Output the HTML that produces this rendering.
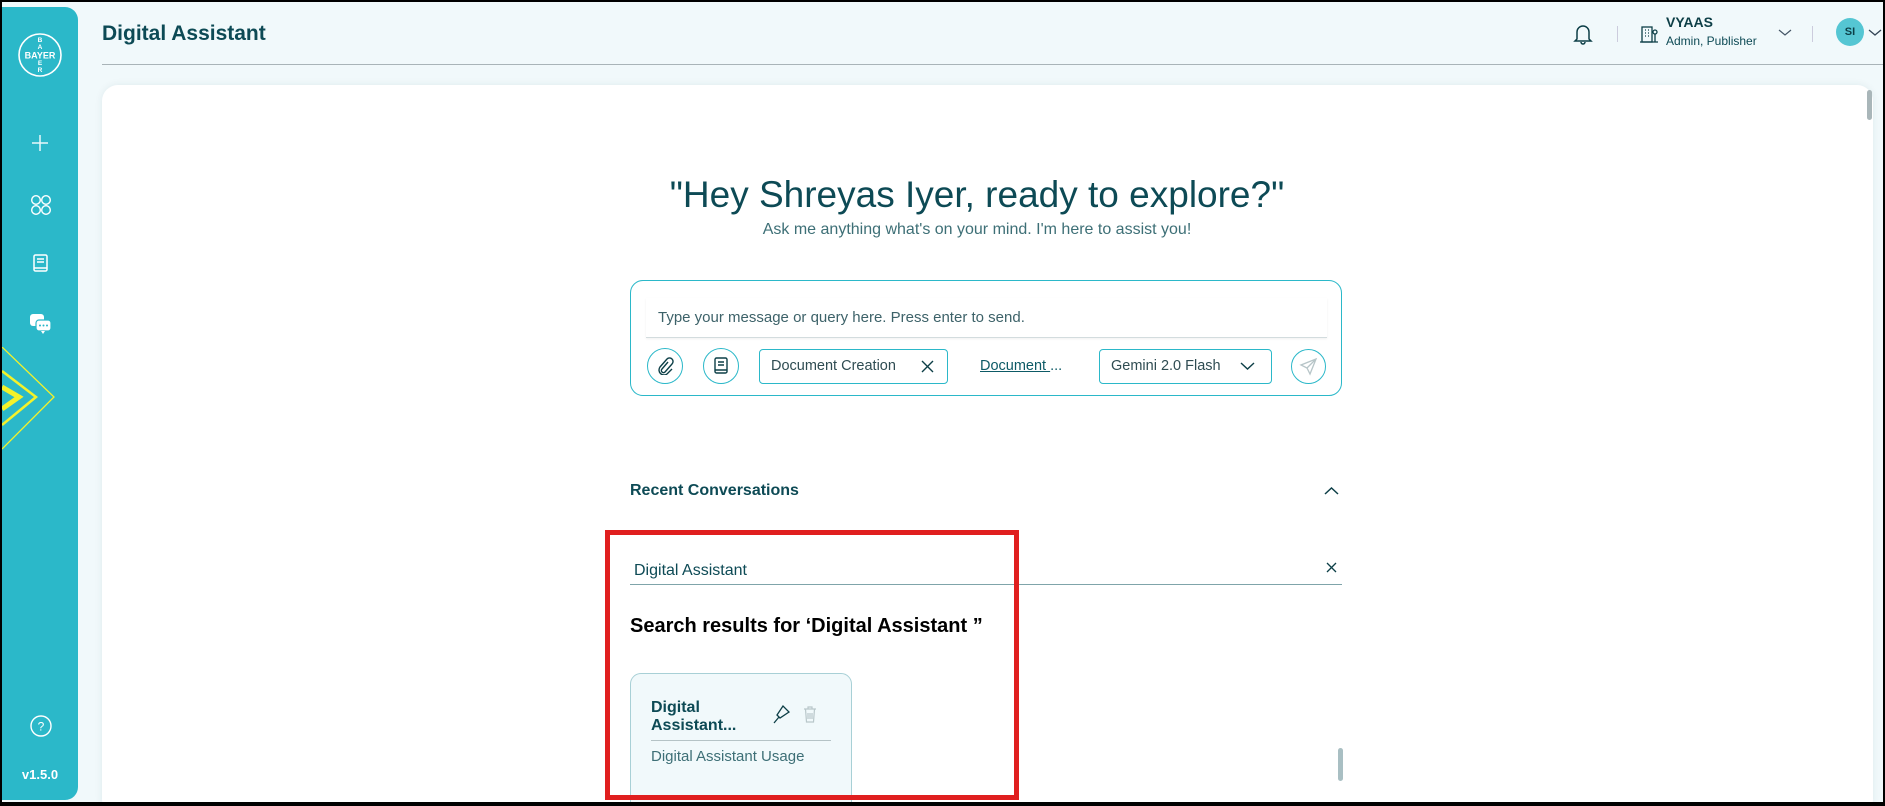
<!DOCTYPE html>
<html><head><meta charset="utf-8"><style>
*{box-sizing:border-box;margin:0;padding:0}
body{width:1885px;height:806px;overflow:hidden;background:#000;font-family:"Liberation Sans",sans-serif;position:relative}
.page{position:absolute;left:2px;top:2px;width:1881px;height:800px;background:#f1f9fb;overflow:hidden}
.abs{position:absolute}
.side{position:absolute;left:0;top:5px;width:76px;height:793px;background:#2bb8c9;border-radius:0 13px 13px 0;overflow:hidden}
.t{position:absolute;white-space:nowrap}
</style></head><body><div class="page">
<div class="side">
 <svg class="abs" style="left:15px;top:25px" width="46" height="46" viewBox="0 0 46 46"><circle cx="23" cy="23" r="21" fill="none" stroke="#fff" stroke-width="1.6"/>
 <text x="23" y="26.5" font-size="9" fill="#fff" text-anchor="middle" font-family="Liberation Sans" font-weight="bold">BAYER</text>
 <text x="23" y="10" font-size="6.5" fill="#fff" text-anchor="middle" font-family="Liberation Sans" font-weight="bold">B</text>
 <text x="23" y="17" font-size="6.5" fill="#fff" text-anchor="middle" font-family="Liberation Sans" font-weight="bold">A</text>
 <text x="23" y="33" font-size="6.5" fill="#fff" text-anchor="middle" font-family="Liberation Sans" font-weight="bold">E</text>
 <text x="23" y="40" font-size="6.5" fill="#fff" text-anchor="middle" font-family="Liberation Sans" font-weight="bold">R</text></svg>
 <svg class="abs" style="left:29px;top:127px" width="18" height="18"><path d="M9 1v16M1 9h16" stroke="#e8f8fa" stroke-width="1.5"/></svg>
 <svg class="abs" style="left:28px;top:187px" width="22" height="22" fill="none" stroke="#fff" stroke-width="1.4"><circle cx="6" cy="6" r="4.3"/><circle cx="16" cy="6" r="4.3"/><circle cx="6" cy="16" r="4.3"/><circle cx="16" cy="16" r="4.3"/></svg>
 <svg class="abs" style="left:31px;top:247px" width="16" height="20" fill="none" stroke="#fff" stroke-width="1.5"><rect x="1" y="1" width="13" height="16" rx="1.5"/><path d="M4 5h7M4 8h7M1 14h13"/></svg>
 <svg class="abs" style="left:27px;top:306px" width="24" height="22"><rect x="1" y="1" width="14" height="12" rx="3" fill="#fff"/><rect x="7" y="7" width="15" height="11" rx="3" fill="#fff" stroke="#2bb8c9" stroke-width="1.2"/><path d="M12 18l2 3 2-3" fill="#fff"/><circle cx="11" cy="12.5" r="1" fill="#2bb8c9"/><circle cx="14.5" cy="12.5" r="1" fill="#2bb8c9"/><circle cx="18" cy="12.5" r="1" fill="#2bb8c9"/></svg>
 <svg class="abs" style="left:0;top:340px" width="60" height="110" fill="none"><path d="M0 0L52 50L0 102" stroke="#f4f22a" stroke-width="1.3"/><path d="M0 24L34 50L0 78" stroke="#f4f22a" stroke-width="2.5"/><path d="M0 40L17 50L0 62" stroke="#f4f22a" stroke-width="5"/></svg>
 <svg class="abs" style="left:27px;top:707px" width="24" height="24" fill="none" stroke="#fff" stroke-width="1.4"><circle cx="12" cy="12" r="10"/><text x="12" y="16.5" font-size="12" fill="#fff" stroke="none" text-anchor="middle" font-family="Liberation Sans">?</text></svg>
 <div class="t" style="left:0;width:76px;text-align:center;top:760px;color:#fff;font-size:13px;font-weight:bold">v1.5.0</div>
</div>
<div class="t" style="left:100px;top:20px;font-size:21px;font-weight:bold;color:#0d4a55">Digital Assistant</div>
<div class="abs" style="left:100px;top:62px;width:1781px;height:1px;background:#a9b4b8"></div>
<svg class="abs" style="left:1571px;top:21px" width="20" height="22" fill="none" stroke="#0d3f47" stroke-width="1.5"><path d="M4 16V9a6 6 0 0112 0v7l2 2H2z"/><path d="M8 19a2 2 0 004 0"/></svg>
<div class="abs" style="left:1615px;top:24px;width:1px;height:16px;background:#ccd"></div>
<svg class="abs" style="left:1637px;top:22px" width="20" height="20" fill="none" stroke="#0d3f47" stroke-width="1.3"><rect x="3" y="3" width="10" height="15"/><path d="M6 6h1M9 6h1M6 9h1M9 9h1M6 12h1M9 12h1M1 18h18M16 18V10"/><circle cx="16" cy="8" r="2"/></svg>
<div class="t" style="left:1664px;top:12px;font-size:14px;font-weight:bold;color:#0d3f47">VYAAS</div>
<div class="t" style="left:1664px;top:32px;font-size:12px;color:#0d4a55">Admin, Publisher</div>
<svg class="abs" style="left:1776px;top:27px" width="14" height="8" fill="none" stroke="#456" stroke-width="1.2"><path d="M1 1l6 5 6-5"/></svg>
<div class="abs" style="left:1810px;top:24px;width:1px;height:16px;background:#ccd"></div>
<div class="abs" style="left:1834px;top:16px;width:28px;height:28px;border-radius:50%;background:#55c6d3;color:#0d3f47;font-size:11px;font-weight:bold;text-align:center;line-height:28px">SI</div>
<svg class="abs" style="left:1866px;top:27px" width="14" height="8" fill="none" stroke="#345" stroke-width="1.3"><path d="M1 1l6 5 6-5"/></svg>
<div class="abs" style="left:100px;top:83px;width:1771px;height:730px;background:#fff;border-radius:16px;box-shadow:0 0 8px rgba(0,60,80,.08)"></div>
<div class="abs" style="left:1865px;top:88px;width:5px;height:30px;border-radius:3px;background:#a9b6b9"></div>
<div class="t" style="left:0;width:1950px;text-align:center;top:172px;font-size:37px;color:#0d4a55">"Hey Shreyas Iyer, ready to explore?"</div>
<div class="t" style="left:0;width:1950px;text-align:center;top:219px;font-size:16px;color:#3d6f76">Ask me anything what's on your mind. I'm here to assist you!</div>
<div class="abs" style="left:628px;top:278px;width:712px;height:116px;border:1px solid #2bb8c9;border-radius:13px"></div>
<div class="abs" style="left:644px;top:296px;width:681px;height:40px;border-bottom:1px solid #d3dcde;box-shadow:0 1px 2px rgba(0,0,0,.06)"></div>
<div class="t" style="left:656px;top:307px;font-size:15px;color:#3d6269">Type your message or query here. Press enter to send.</div>
<div class="abs" style="left:645px;top:346px;width:36px;height:36px;border:1px solid #2bb8c9;border-radius:50%"></div>
<svg class="abs" style="left:654px;top:355px" width="18" height="18" fill="none" stroke="#0d3f47" stroke-width="1.4"><path d="M12 5l-6 7a2 2 0 003 3l7-8a3.5 3.5 0 00-5-5L4 10a5 5 0 007 7l5-5"/></svg>
<div class="abs" style="left:701px;top:346px;width:36px;height:36px;border:1px solid #2bb8c9;border-radius:50%"></div>
<svg class="abs" style="left:712px;top:355px" width="14" height="18" fill="none" stroke="#0d3f47" stroke-width="1.4"><rect x="1" y="1" width="12" height="15" rx="1.5"/><path d="M4 5h6M4 8h6M1 13h12"/></svg>
<div class="abs" style="left:757px;top:347px;width:189px;height:35px;border:1px solid #2bb8c9;border-radius:4px"></div>
<div class="t" style="left:769px;top:356px;font-size:14.5px;color:#2f4c52">Document Creation</div>
<svg class="abs" style="left:919px;top:358px" width="13" height="13" stroke="#0d3f47" stroke-width="1.4"><path d="M1 1l11 11M12 1L1 12"/></svg>
<div class="t" style="left:978px;top:356px;font-size:14.5px;color:#0d5a66"><span style="text-decoration:underline">Document </span>...</div>
<div class="abs" style="left:1097px;top:347px;width:173px;height:35px;border:1px solid #2bb8c9;border-radius:4px"></div>
<div class="t" style="left:1109px;top:356px;font-size:14.5px;color:#2f4c52">Gemini 2.0 Flash</div>
<svg class="abs" style="left:1238px;top:360px" width="15" height="9" fill="none" stroke="#0d3f47" stroke-width="1.4"><path d="M1 1l6.5 6 6.5-6"/></svg>
<div class="abs" style="left:1289px;top:347px;width:35px;height:35px;border:1px solid #2bb8c9;border-radius:50%"></div>
<svg class="abs" style="left:1297px;top:355px" width="19" height="19" fill="none" stroke="#b7c5c8" stroke-width="1.3"><path d="M17 2L2 8l6 3 3 6z M8 11l9-9"/></svg>
<div class="t" style="left:628px;top:480px;font-size:16px;font-weight:bold;color:#0d4a55">Recent Conversations</div>
<svg class="abs" style="left:1322px;top:484px" width="15" height="9" fill="none" stroke="#0d3f47" stroke-width="1.5"><path d="M1 8l6.5-6 6.5 6"/></svg>
<div class="t" style="left:632px;top:560px;font-size:16px;color:#0d4a55">Digital Assistant</div>
<div class="abs" style="left:628px;top:582px;width:712px;height:1px;background:#7fa4aa"></div>
<svg class="abs" style="left:1324px;top:560px" width="11" height="11" stroke="#0d3f47" stroke-width="1.3"><path d="M1 1l9 9M10 1L1 10"/></svg>
<div class="t" style="left:628px;top:613px;font-size:20px;font-weight:bold;color:#000">Search results for ‘Digital Assistant ”</div>
<div class="abs" style="left:628px;top:671px;width:222px;height:150px;background:#f1f9fb;border:1px solid #a8d0d6;border-radius:11px"></div>
<div class="t" style="left:649px;top:697px;font-size:16px;font-weight:bold;color:#0d4a55;line-height:18px">Digital<br>Assistant...</div>
<svg class="abs" style="left:770px;top:702px" width="18" height="20" fill="none" stroke="#0d3f47" stroke-width="1.3"><path d="M2 19l5-6M5 11l6-9 6 6-9 6zM5 11l3 3"/></svg>
<svg class="abs" style="left:801px;top:704px" width="14" height="17" fill="none" stroke="#b9c7ca" stroke-width="1.2"><path d="M1 3h12M5 3V1h4v2M2.5 3l1 13h7l1-13M5 7v6M7 7v6M9 7v6"/></svg>
<div class="abs" style="left:649px;top:738px;width:180px;height:1px;background:#b5c3c6"></div>
<div class="t" style="left:649px;top:746px;font-size:15px;color:#3d6f76">Digital Assistant Usage</div>
<div class="abs" style="left:1336px;top:746px;width:5px;height:33px;border-radius:3px;background:#a9bfc3"></div>
<div class="abs" style="left:603px;top:528px;width:414px;height:270px;border:5px solid #e01f1f"></div>
</div></body></html>
